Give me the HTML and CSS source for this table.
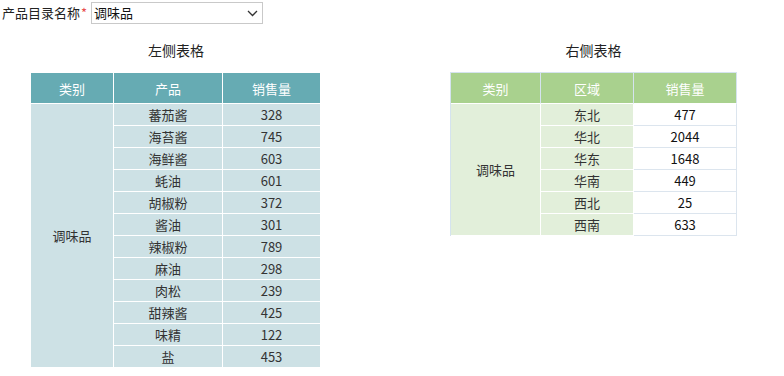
FILE: index.html
```html
<!DOCTYPE html>
<html lang="zh">
<head>
<meta charset="utf-8">
<title>产品</title>
<link rel="stylesheet" href="styles.css">
</head>
<body>
<div class="filter">
  <span class="label">产品目录名称</span><span class="req">*</span>
  <div class="select">
    <span class="select-value">调味品</span>
    <svg class="chev" width="11" height="7" viewBox="0 0 11 7"><path d="M1 1 L5.5 5.5 L10 1" fill="none" stroke="#333" stroke-width="1.3"/></svg>
  </div>
</div>
<div class="panels">
  <div class="panel">
    <div class="title title-left">左侧表格</div>
    <table class="tbl tbl-left">
      <colgroup><col class="lc1"><col class="lc2"><col class="lc3"></colgroup>
      <thead><tr><th>类别</th><th>产品</th><th>销售量</th></tr></thead>
      <tbody>
        <tr><td rowspan="12">调味品</td><td>蕃茄酱</td><td>328</td></tr>
        <tr><td>海苔酱</td><td>745</td></tr>
        <tr><td>海鲜酱</td><td>603</td></tr>
        <tr><td>蚝油</td><td>601</td></tr>
        <tr><td>胡椒粉</td><td>372</td></tr>
        <tr><td>酱油</td><td>301</td></tr>
        <tr><td>辣椒粉</td><td>789</td></tr>
        <tr><td>麻油</td><td>298</td></tr>
        <tr><td>肉松</td><td>239</td></tr>
        <tr><td>甜辣酱</td><td>425</td></tr>
        <tr><td>味精</td><td>122</td></tr>
        <tr><td>盐</td><td>453</td></tr>
      </tbody>
    </table>
  </div>
  <div class="panel">
    <div class="title title-right">右侧表格</div>
    <table class="tbl tbl-right">
      <colgroup><col class="rc1"><col class="rc2"><col class="rc3"></colgroup>
      <thead><tr><th>类别</th><th>区域</th><th>销售量</th></tr></thead>
      <tbody>
        <tr><td class="g" rowspan="6">调味品</td><td class="g">东北</td><td class="w">477</td></tr>
        <tr><td class="g">华北</td><td class="w">2044</td></tr>
        <tr><td class="g">华东</td><td class="w">1648</td></tr>
        <tr><td class="g">华南</td><td class="w">449</td></tr>
        <tr><td class="g">西北</td><td class="w">25</td></tr>
        <tr><td class="g">西南</td><td class="w">633</td></tr>
      </tbody>
    </table>
  </div>
</div>
</body>
</html>
```
FILE: styles.css
```css
html, body {
  margin: 0;
  padding: 0;
  background: #fff;
  font-family: "Noto Sans CJK SC", "Microsoft YaHei", sans-serif;
  font-size: 13px;
  color: #333;
}
.filter {
  display: flex;
  align-items: center;
  padding: 2px 0 0 2px;
  height: 22px;
}
.label {
  color: #222;
  line-height: 22px;
}
.req {
  color: #e84c4c;
  margin-left: 1px;
  margin-right: 4px;
  line-height: 22px;
}
.select {
  height: 20px;
  border: 1px solid #c9c9c9;
  display: flex;
  align-items: center;
  justify-content: space-between;
  padding: 0 4px 0 2px;
  box-sizing: content-box;
  width: 164px;
}
.select-value {
  color: #111;
  line-height: 20px;
}
.chev {
  display: block;
}
.panels {
  display: flex;
  align-items: flex-start;
  padding-left: 31px;
  gap: 129px;
}
.panel {
  display: flex;
  flex-direction: column;
}
.title {
  box-sizing: border-box;
  text-align: center;
  font-size: 14px;
  line-height: 20px;
  color: #222;
  padding-top: 16px;
}
.title-left { height: 49px; }
.title-right { height: 48px; }
.tbl {
  border-collapse: separate;
  border-spacing: 0;
  table-layout: fixed;
}
.tbl th, .tbl td {
  padding: 0;
  text-align: center;
  font-weight: normal;
  border-right: 1px solid #fff;
  border-bottom: 1px solid #fff;
}
.tbl th {
  height: 30px;
  color: #fff;
}
.tbl td {
  height: 21px;
  line-height: 21px;
}
.tbl-left th { background: #66abb3; }
.tbl-left td { background: #cde1e5; }
.lc1 { width: 83px; }
.lc2 { width: 109px; }
.lc3 { width: 98px; }
.tbl-left { width: 290px; }

.tbl-right {
  width: 287px;
  border-top: 1px solid #d5e3ef;
  border-left: 1px solid #d5e3ef;
}
.tbl-right th {
  background: #a9d18e;
  border-right-color: #d5e3ef;
  border-bottom-color: #fff;
}
.tbl-right td.g { background: #e2efda; }
.tbl-right td.w {
  background: #fff;
  border-right-color: #dce5ee;
  border-bottom-color: #dce5ee;
  color: #111;
}
.rc1 { width: 90px; }
.rc2 { width: 93px; }
.rc3 { width: 103px; }
```
